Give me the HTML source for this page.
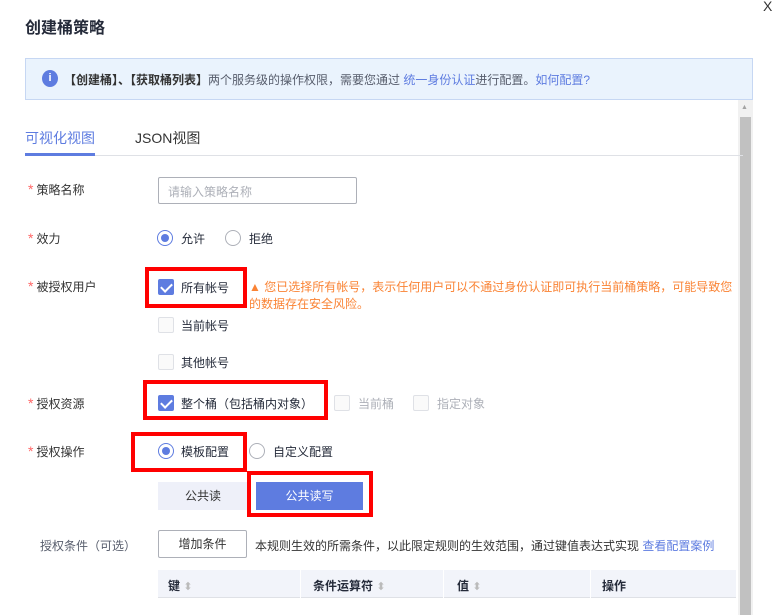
<!DOCTYPE html>
<html><head><meta charset="utf-8"><style>
*{margin:0;padding:0;box-sizing:border-box}
body{width:776px;height:615px;overflow:hidden;background:#fff;font-family:"Liberation Sans","Noto Sans CJK SC",sans-serif;font-size:12px;color:#252b3a;position:relative}
.a{position:absolute;white-space:nowrap}
.lbl{position:absolute;left:28px;color:#333;font-size:12px}
.lbl b{color:#f66;font-weight:normal;margin-right:3px;font-size:14px}
.cb{position:absolute;width:16px;height:16px;border:1px solid #dfe1e6;background:#fafafa;border-radius:2px}
.cb.on{background:#5e7ce0;border-color:#5e7ce0}
.cb.on:after{content:"";position:absolute;left:4px;top:1px;width:5px;height:9px;border:solid #fff;border-width:0 2px 2px 0;transform:rotate(45deg)}
.rd{position:absolute;width:16px;height:16px;border:1px solid #adb0b8;border-radius:50%;background:#fff}
.rd.on{border-color:#5e7ce0}
.rd.on:after{content:"";position:absolute;left:3px;top:3px;width:8px;height:8px;border-radius:50%;background:#5e7ce0}
.red{position:absolute;border:4px solid #f00}
.dis{color:#adb0b8}
.s{color:#bbb;font-size:11px;font-weight:normal}
</style></head><body>
<div class="a" style="left:25px;top:14px;font-size:16px;color:#252b3a;font-weight:bold">创建桶策略</div>
<div class="a" style="left:763px;top:-2px;font-size:14px;color:#333">X</div>

<div class="a" style="left:25px;top:58px;width:728px;height:42px;background:#eaf3fd;border:1px solid #c6d7f3"></div>
<div class="a" style="left:42px;top:70px;width:16px;height:17px;border-radius:50%;background:#5e7ce0;color:#fff;font-size:11px;font-weight:bold;text-align:center;line-height:17px">i</div>
<div class="a" style="left:64px;top:71px;color:#333"><b>【创建桶】、【获取桶列表】</b><span style="color:#575d6c">两个服务级的操作权限，需要您通过</span> <span style="color:#5e7ce0">统一身份认证</span><span style="color:#575d6c">进行配置。</span><span style="color:#5e7ce0">如何配置?</span></div>

<div class="a" style="left:738px;top:100px;width:15px;height:515px;background:#f1f1f1"></div>
<div class="a" style="left:741px;top:104px;color:#a3a3a3;font-size:7px">▲</div>
<div class="a" style="left:740px;top:117px;width:11px;height:498px;background:#c1c1c1"></div>

<div class="a" style="left:25px;top:128px;font-size:14px;color:#5e7ce0">可视化视图</div>
<div class="a" style="left:135px;top:128px;font-size:14px;color:#333">JSON视图</div>
<div class="a" style="left:25px;top:155px;width:718px;height:1px;background:#dfe1e6"></div>
<div class="a" style="left:25px;top:153px;width:70px;height:3px;background:#5e7ce0"></div>

<div class="lbl" style="top:181px"><b>*</b>策略名称</div>
<div class="a" style="left:158px;top:177px;width:199px;height:27px;border:1px solid #adb0b8;border-radius:2px"></div>
<div class="a dis" style="left:168px;top:183px">请输入策略名称</div>

<div class="lbl" style="top:230px"><b>*</b>效力</div>
<div class="rd on" style="left:157px;top:230px"></div><div class="a" style="left:181px;top:230px">允许</div>
<div class="rd" style="left:225px;top:230px"></div><div class="a" style="left:249px;top:230px">拒绝</div>

<div class="lbl" style="top:278px"><b>*</b>被授权用户</div>
<div class="cb on" style="left:158px;top:279px"></div><div class="a" style="left:181px;top:279px">所有帐号</div>
<div class="a" style="left:249px;top:279px;color:#fa8334;line-height:17px">▲ 您已选择所有帐号，表示任何用户可以不通过身份认证即可执行当前桶策略，可能导致您<br>的数据存在安全风险。</div>
<div class="red" style="left:145px;top:267px;width:102px;height:41px"></div>
<div class="cb" style="left:158px;top:317px"></div><div class="a" style="left:181px;top:317px">当前帐号</div>
<div class="cb" style="left:158px;top:354px"></div><div class="a" style="left:181px;top:354px">其他帐号</div>

<div class="lbl" style="top:395px"><b>*</b>授权资源</div>
<div class="cb on" style="left:158px;top:395px"></div><div class="a" style="left:181px;top:395px">整个桶（包括桶内对象）</div>
<div class="red" style="left:143px;top:380px;width:185px;height:40px"></div>
<div class="cb" style="left:334px;top:395px"></div><div class="a dis" style="left:358px;top:395px">当前桶</div>
<div class="cb" style="left:413px;top:395px"></div><div class="a dis" style="left:437px;top:395px">指定对象</div>

<div class="lbl" style="top:443px"><b>*</b>授权操作</div>
<div class="rd on" style="left:158px;top:443px"></div><div class="a" style="left:181px;top:443px">模板配置</div>
<div class="red" style="left:131px;top:432px;width:116px;height:40px"></div>
<div class="rd" style="left:249px;top:443px"></div><div class="a" style="left:273px;top:443px">自定义配置</div>

<div class="a" style="left:158px;top:482px;width:90px;height:28px;background:#eef0f9;text-align:center;line-height:28px;color:#333">公共读</div>
<div class="a" style="left:256px;top:482px;width:107px;height:28px;background:#5e7ce0;text-align:center;line-height:28px;color:#fff">公共读写</div>
<div class="red" style="left:247px;top:471px;width:126px;height:46px"></div>

<div class="a" style="left:40px;top:537px;color:#575d6c">授权条件（可选）</div>
<div class="a" style="left:158px;top:530px;width:89px;height:28px;border:1px solid #adb0b8;border-radius:2px;text-align:center;line-height:26px;color:#333">增加条件</div>
<div class="a" style="left:255px;top:537px;color:#333">本规则生效的所需条件，以此限定规则的生效范围，通过键值表达式实现 <span style="color:#5e7ce0">查看配置案例</span></div>

<div class="a" style="left:158px;top:570px;width:578px;height:28px;background:#f2f4fa;border-bottom:1px solid #dfe1e6"></div>
<div class="a" style="left:300px;top:570px;width:1px;height:28px;background:#fff"></div>
<div class="a" style="left:443px;top:570px;width:1px;height:28px;background:#fff"></div>
<div class="a" style="left:590px;top:570px;width:1px;height:28px;background:#fff"></div>
<div class="a" style="left:168px;top:577px;font-weight:bold">键 <span class="s">⬍</span></div>
<div class="a" style="left:313px;top:577px;font-weight:bold">条件运算符 <span class="s">⬍</span></div>
<div class="a" style="left:457px;top:577px;font-weight:bold">值 <span class="s">⬍</span></div>
<div class="a" style="left:602px;top:577px;font-weight:bold">操作</div>
</body></html>
